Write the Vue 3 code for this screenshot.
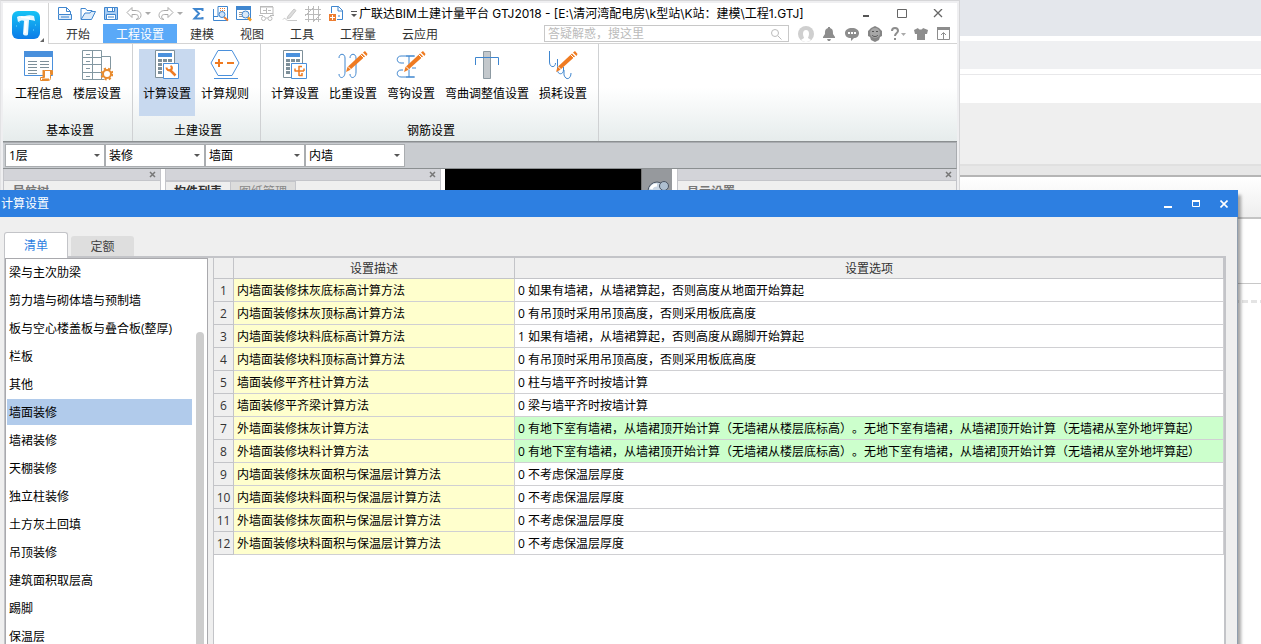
<script setup>
import { ref } from 'vue'

const menuTabs = ['开始', '工程设置', '建模', '视图', '工具', '工程量', '云应用']
const activeMenu = ref('工程设置')

const ribbonGroups = [
  {
    title: '基本设置',
    items: [
      { label: '工程信息', icon: 'info' },
      { label: '楼层设置', icon: 'floor' },
    ],
  },
  {
    title: '土建设置',
    items: [
      { label: '计算设置', icon: 'calc', active: true },
      { label: '计算规则', icon: 'rule' },
    ],
  },
  {
    title: '钢筋设置',
    items: [
      { label: '计算设置', icon: 'rebar' },
      { label: '比重设置', icon: 'weight' },
      { label: '弯钩设置', icon: 'hook' },
      { label: '弯曲调整值设置', icon: 'bend', wide: true },
      { label: '损耗设置', icon: 'loss' },
    ],
  },
]

const selectors = [
  { name: '楼层', value: '1层' },
  { name: '构件大类', value: '装修' },
  { name: '构件类型', value: '墙面' },
  { name: '构件', value: '内墙' },
]

const categories = [
  '梁与主次肋梁', '剪力墙与砌体墙与预制墙', '板与空心楼盖板与叠合板(整厚)', '栏板', '其他',
  '墙面装修', '墙裙装修', '天棚装修', '独立柱装修', '土方灰土回填', '吊顶装修',
  '建筑面积取层高', '踢脚', '保温层',
]
const activeCategory = ref('墙面装修')

const basement = '0 有地下室有墙裙，从墙裙顶开始计算（无墙裙从楼层底标高）。无地下室有墙裙，从墙裙顶开始计算（无墙裙从室外地坪算起）'
const rows = [
  { name: '内墙面装修抹灰底标高计算方法', option: '0 如果有墙裙，从墙裙算起，否则高度从地面开始算起' },
  { name: '内墙面装修抹灰顶标高计算方法', option: '0 有吊顶时采用吊顶高度，否则采用板底高度' },
  { name: '内墙面装修块料底标高计算方法', option: '1 如果有墙裙，从墙裙算起，否则高度从踢脚开始算起' },
  { name: '内墙面装修块料顶标高计算方法', option: '0 有吊顶时采用吊顶高度，否则采用板底高度' },
  { name: '墙面装修平齐柱计算方法', option: '0 柱与墙平齐时按墙计算' },
  { name: '墙面装修平齐梁计算方法', option: '0 梁与墙平齐时按墙计算' },
  { name: '外墙面装修抹灰计算方法', option: basement, changed: true },
  { name: '外墙面装修块料计算方法', option: basement, changed: true },
  { name: '内墙面装修抹灰面积与保温层计算方法', option: '0 不考虑保温层厚度' },
  { name: '内墙面装修块料面积与保温层计算方法', option: '0 不考虑保温层厚度' },
  { name: '外墙面装修抹灰面积与保温层计算方法', option: '0 不考虑保温层厚度' },
  { name: '外墙面装修块料面积与保温层计算方法', option: '0 不考虑保温层厚度' },
]
</script>

<template>
  <div class="desktop">
    <div class="backdrop">
      <div class="b-title"></div>
      <div class="b-tabs"></div>
      <div class="b-line"></div>
      <div class="b-ribbon"></div>
      <div class="b-edge"></div>
      <div class="b-head"></div>
      <div class="b-rule"></div>
      <div class="b-dash"></div>
    </div>

    <main class="window">
      <header class="top">
        <button class="logo" aria-label="应用菜单">
          <svg width="38" height="36" viewBox="0 0 38 36">
            <defs>
              <linearGradient id="lg" x1="0" y1="0" x2="0" y2="1">
                <stop offset="0" stop-color="#16c3f5" />
                <stop offset="1" stop-color="#0b7be8" />
              </linearGradient>
            </defs>
            <rect x="3" y="3" width="28" height="28" rx="6" fill="url(#lg)" />
            <path d="M8 9c3-2 5 0 8-1s6-1 9 0l1 5c-2-1-4-1-6-1l-1 14c0 2-4 2-5 0l1-13c-2-1-4 0-6 1z" fill="#e6f7ff" />
            <path d="M17 13l-1 12M12 9l9 1" stroke="#fff" stroke-width="2" fill="none" />
            <path d="M7 18h1M26 17h1M24 22h1M10 14h1" stroke="#7fd9ff" stroke-width="1" />
            <path d="M35 30v4h-4z" fill="#666" />
          </svg>
        </button>
        <div class="top-main">
          <div class="title-row">
            <div class="quick">
              <button aria-label="新建"><svg width="16" height="16" viewBox="0 0 16 16" fill="none" stroke="#3f86cf"><path d="M1.5 8V1.500h8l4 4V8M9.500 1.500v4h4" /><path d="M1.500 8.500h13v5h-13z" fill="#dcebfa" /><path d="M4 11h8" /></svg></button>
              <button aria-label="打开"><svg width="16" height="16" viewBox="0 0 16 16" fill="none" stroke="#3f86cf"><path d="M1 13V2.500h4.500l1.500 2h5V7" /><path d="M1 13.500l4-6.500h5l1-1.500h4.500l-4 8z" fill="#dcebfa" /></svg></button>
              <button aria-label="保存"><svg width="16" height="16" viewBox="0 0 16 16" fill="none" stroke="#3f86cf"><path d="M1.500 1.500h13v12h-13z" fill="#a9cdf3" /><path d="M4.500 1.500h7v4h-7z" fill="#fff" /><path d="M3.500 8.500h9v5h-9z" fill="#fff" /><path d="M5 11h6M9.500 2v3" /></svg></button>
              <button class="with-caret" aria-label="撤销"><svg width="16" height="16" viewBox="0 0 16 16" fill="none" stroke="#aaa"><path d="M1 6.500l5-5v3h3c4 0 6 2 6 5s-3 4-5 4c2-1 3-2 2-4-1-1-2-1-3-1H6v3z" /></svg><i class="caret pale"></i></button>
              <button class="with-caret" aria-label="恢复"><svg width="16" height="16" viewBox="0 0 16 16" fill="none" stroke="#aaa"><path d="M15 6.500l-5-5v3H7c-4 0-6 2-6 5s3 4 5 4c-2-1-3-2-2-4 1-1 2-1 3-1h3v3z" /></svg><i class="caret pale"></i></button>
              <button aria-label="汇总计算"><svg width="16" height="16" viewBox="0 0 16 16" fill="none" stroke="#3f86cf" stroke-width="2"><path d="M12.500 5V3H4.500L9 7.500l-4.500 5h8V11" /></svg></button>
              <button aria-label="查看工程量"><svg width="16" height="16" viewBox="0 0 16 16" fill="none"><path d="M5 10.500V.5h9.500v14H.5V3M.5 10.500H5" stroke="#3f86cf" /><path d="M7 2.500h6M7 4.500h6" stroke="#ed7d31" stroke-dasharray="1 1" /><path d="M11 11l4 3.500" stroke="#ed7d31" stroke-width="2" /><circle cx="9" cy="8.500" r="3" fill="#cfe3f8" stroke="#3f86cf" /></svg></button>
              <button aria-label="查看报表"><svg width="16" height="16" viewBox="0 0 16 16" fill="none"><path d="M.5 1.500h14v12H.500z" stroke="#3f86cf" /><path d="M0 0h15v4H0z" fill="#3f86cf" /><path d="M3 6.500h3M3 8.500h3M3 10.500h3" stroke="#999" /><circle cx="9.500" cy="8.500" r="3.500" fill="#dceaf8" stroke="#3f86cf" /><path d="M12 11.500l3 3" stroke="#f39a1f" stroke-width="2.500" /></svg></button>
              <button aria-label="对比"><svg width="16" height="16" viewBox="0 0 16 16" fill="none" stroke="#bbb"><path d="M1.500 8V1h12.500v8M4 4.500h3M9 4.500h3M7.500 2v5M1 .5h13M1 7.500h13" /><circle cx="4.500" cy="12.500" r="2" /><circle cx="11" cy="12.500" r="2" /><path d="M7 12h2M0 9.500h4M11 9.500h4" /></svg></button>
              <button aria-label="绘制"><svg width="16" height="16" viewBox="0 0 16 16" fill="none" stroke="#c8c8c8"><path d="M6 10l6-7 2 1.500L8 12l-3 .5z" fill="#ddd" /><path d="M1 13.500c2-3 3 1 5 1h9" /></svg></button>
              <button aria-label="轴网"><svg width="16" height="16" viewBox="0 0 16 16" fill="none" stroke="#bbb"><path d="M3.500 0v16M8.500 0v16M13.500 0v16M0 3.500h16M0 8.500h16M0 13.500h16M0 10l8-8M8 16l7-7" /></svg></button>
              <button aria-label="导出"><svg width="16" height="16" viewBox="0 0 16 16" fill="none"><path d="M3.500 7V.5h7l4 4v9H9M10 0v5h5" stroke="#3f86cf" /><path d="M1 8h7v7H1z" fill="#ed7d31" /><path d="M4.500 9v5M2 11.500h5" stroke="#fff" /><path d="M10 10h2" stroke="#3f86cf" /></svg></button>
              <button class="more" aria-label="自定义快速访问"><i class="caret dark"></i></button>
            </div>
            <h1 class="title">广联达BIM土建计量平台 GTJ2018 - [E:\清河湾配电房\k型站\K站：建模\工程1.GTJ]</h1>
            <div class="controls">
              <button aria-label="最小化"><svg width="10" height="10"><path d="M2 7h6" stroke="#555" stroke-width="2" /></svg></button>
              <button aria-label="最大化"><svg width="10" height="10"><path d="M.5 .5h9v8h-9z" stroke="#666" fill="none" /></svg></button>
              <button aria-label="关闭"><svg width="10" height="10"><path d="M1 0l8 8M9 0l-8 8" stroke="#666" stroke-width="1.300" /></svg></button>
            </div>
          </div>
          <div class="menu-row">
            <nav class="menu">
              <button v-for="t in menuTabs" :key="t" :class="{ on: t === activeMenu }" @click="activeMenu = t">{{ t }}</button>
            </nav>
            <div class="search">
              <input type="text" aria-label="搜索" placeholder="答疑解惑，搜这里" />
              <svg width="12" height="12" fill="none" stroke="#bbb"><circle cx="5" cy="5" r="3.500" /><path d="M8 8l3.500 3.500" /></svg>
            </div>
            <div class="tools">
              <button aria-label="用户"><svg width="16" height="16"><circle cx="8" cy="8" r="8" fill="#cfcfcf" /><path d="M5 8a3 4 0 0 1 6 0c0 2-1 3-1 4l3 2a8 8 0 0 1-10 0l3-2c0-1-1-2-1-4z" fill="#fff" /></svg></button>
              <button aria-label="通知"><svg width="16" height="16" fill="#8d8d8d"><path d="M7 1h2v1c3 1 3 3 3 6l2 3v1H2v-1l2-3c0-3 0-5 3-6zM6 13h4l-1 2H7z" /></svg></button>
              <button aria-label="消息"><svg width="16" height="16"><path d="M8 2c4 0 7 2 7 5s-2 5-5 5l-3 3v-3c-4 0-6-2-6-5s3-5 7-5z" fill="#8d8d8d" /><path d="M4 6h2v2H4zM7 6h2v2H7zM10 6h2v2h-2z" fill="#fff" /></svg></button>
              <button aria-label="客服"><svg width="16" height="16"><path d="M4 2l4-2 4 2 3 3v5l-2 1-1 3-4 2-4-2-1-3-2-1V5z" fill="#858585" /><circle cx="8" cy="7" r="5" fill="#a7a7a7" /><path d="M5 5.500h2M9 5.500h2M5 9c1 2 5 2 6 0" stroke="#555" fill="none" /></svg></button>
              <button class="help" aria-label="帮助"><svg width="17" height="16" fill="none" stroke="#8d8d8d" stroke-width="2"><path d="M2 5c0-4 6-4 6 0 0 2-3 2-3 5M5 12v2" /><path d="M11 7h5l-2.500 3z" fill="#aaa" stroke="none" /></svg></button>
              <button aria-label="换肤"><svg width="16" height="16"><path d="M4 2c1 2 4 2 5 0l5 2-1 4h-2v6H3V8H1L0 4z" fill="#8d8d8d" /></svg></button>
              <button aria-label="折叠功能区"><svg width="16" height="16" fill="none" stroke="#8d8d8d"><path d="M.5 3v10.500h12V3M6.500 13V7M4 9l2.500-2.500L9 9" /><path d="M0 2.500h13" stroke-width="3" /></svg></button>
            </div>
          </div>
        </div>
      </header>

      <section class="ribbon">
        <div v-for="g in ribbonGroups" :key="g.title" class="group">
          <div class="group-items">
            <button v-for="it in g.items" :key="it.icon" class="rb" :class="{ active: it.active, wide: it.wide }">
              <svg v-if="it.icon === 'info'" width="32" height="32" viewBox="0 0 32 32" fill="none">
                <path d="M1.500 2.500h28v24h-28z" stroke="#4a90dc" fill="#fff" /><path d="M1 2h29v6H1z" fill="#4a90dc" />
                <path d="M5 12.500h9M17 12.500h9M5 15.500h9M17 15.500h9M5 18.500h9M17 18.500h9M5 21.500h9M5 24.500h9" stroke="#7d8f99" />
                <path d="M21.500 21.500h8v4h-2v4c0 1-1 2-2 2h-8v-3h4z" fill="#fff" stroke="#e88b2e" /><path d="M19 30.500h7M20.500 21v7M28 21v4" stroke="#e88b2e" stroke-width="2" />
              </svg>
              <svg v-else-if="it.icon === 'floor'" width="32" height="32" viewBox="0 0 32 32" fill="none">
                <path d="M1.500 1.500h19v29h-19zM11.500 1.500v29M1.500 8.500h19M1.500 15.500h19M1.500 23.500h19M20.500 7.500h9v13M5 5.500h4M5 12.500h4M5 19.500h4M5 27.500h4M20 30.500h3" stroke="#8297a1" />
                <circle cx="26" cy="25" r="5" fill="#fff" stroke="#e88b2e" stroke-width="3" stroke-dasharray="2 2" /><circle cx="26" cy="25" r="4" fill="#fff" stroke="#e88b2e" stroke-width="2" />
              </svg>
              <svg v-else-if="it.icon === 'calc' || it.icon === 'rebar'" width="32" height="32" viewBox="0 0 32 32" fill="none">
                <path d="M4.500 1.500h19v27h-19z" fill="#fff" stroke="#7d8f99" /><path d="M7 4h14v4H7z" fill="#4a90dc" />
                <path d="M7 11.500h14M7 15.500h14M7 19.500h5M7 23.500h5" stroke="#7d8f99" stroke-width="3" stroke-dasharray="4 1" />
                <path d="M12.500 14.500h15v15h-15z" fill="#fff" stroke="#4a90dc" />
                <g v-if="it.icon === 'calc'" stroke="#ef7b22"><path d="M18.500 20.500l6 6" stroke-width="2.500" /><path d="M15.500 18.500c0 2 2 3.500 4 2.500s2-3 0-4" stroke-width="2" /></g>
                <path v-else d="M20 17v10M15.500 22H25M19.500 17.500H23M16 19.500v2.500M25 22v-2.500M20 26.500h3V24" stroke="#ef7b22" stroke-width="1.500" />
              </svg>
              <svg v-else-if="it.icon === 'rule'" width="32" height="32" viewBox="0 0 32 32" fill="none">
                <path d="M9 1.500h14L30 14l-7 12.500H9L2 14zM5 29.500h24" stroke="#4a90dc" /><path d="M6 14h8M10 10v8M18 14h7" stroke="#ef7b22" stroke-width="2" />
              </svg>
              <svg v-else-if="it.icon === 'bend'" width="32" height="32" viewBox="0 0 32 32" fill="none">
                <path d="M12.500 2.500h7v27h-7z" fill="#c3c8cc" stroke="#8d9aa2" /><path d="M4.500 16V8.500h23V16" stroke="#3f86cf" />
              </svg>
              <svg v-else width="32" height="32" viewBox="0 0 32 32" fill="none">
                <path v-if="it.icon === 'weight'" d="M2 9c0-5 6-5 6 0v14c0 7-6 7-6 2M13 9c0-5 6-5 6 0v14c0 7-6 7-6 2" stroke="#3f86cf" />
                <path v-else-if="it.icon === 'hook'" d="M9 14H6c-5 0-5-7 0-7h14M14 7v21M20 28H6c-5 0-5-7 0-7h2M11 7h8M11 28h8M17 19h4" stroke="#3f86cf" />
                <path v-else d="M2.500 2v11c0 6 6 6 6 1M10.500 10v11c0 5 6 5 6 0v-3M17 21v5c2 6 7 4 7-2" stroke="#3f86cf" />
                <path d="M9 23l1.500-5L25 4.500l3 3L13 21z" fill="#ef7b22" /><path d="M23.500 5.500l4 4M11 17.500l3.500 3.500" stroke="#fff" /><path d="M26 3.500l2-1.500 2.500 3-1 2z" fill="#ef7b22" />
              </svg>
              <span>{{ it.label }}</span>
            </button>
          </div>
          <div class="caption">{{ g.title }}</div>
        </div>
      </section>

      <section class="selectors">
        <div v-for="s in selectors" :key="s.name" class="pick">
          <select :aria-label="s.name"><option>{{ s.value }}</option></select>
          <i class="caret"></i>
        </div>
      </section>

      <section class="docks">
        <div class="dock nav-dock">
          <div class="dock-head"><button aria-label="关闭导航树"><svg width="7" height="7"><path d="M1 1l5 5M6 1L1 6" stroke="#777" stroke-width="1.500" /></svg></button></div>
          <div class="dock-title">导航树</div>
        </div>
        <div class="dock list-dock">
          <div class="dock-head"><button aria-label="关闭构件列表"><svg width="7" height="7"><path d="M1 1l5 5M6 1L1 6" stroke="#777" stroke-width="1.500" /></svg></button></div>
          <div class="dock-tabs"><button class="on">构件列表</button><button>图纸管理</button></div>
        </div>
        <div class="canvas">
          <div class="view-tool">
            <svg width="24" height="24" viewBox="0 0 24 24" stroke="#4b5563"><circle cx="10" cy="11" r="9" fill="#c9d6e4" /><circle cx="17" cy="6" r="4.500" fill="#aebfd0" /><path d="M4 9c1-3 4-4 6-4" stroke="#fff" stroke-width="3" fill="none" /></svg>
          </div>
        </div>
        <div class="dock show-dock">
          <div class="dock-head"><button aria-label="关闭显示设置"><svg width="7" height="7"><path d="M1 1l5 5M6 1L1 6" stroke="#777" stroke-width="1.500" /></svg></button></div>
          <div class="dock-title">显示设置</div>
        </div>
      </section>
    </main>

    <section class="dialog" role="dialog" aria-labelledby="dlg-title">
      <header class="dlg-bar">
        <h2 id="dlg-title">计算设置</h2>
        <div class="dlg-controls">
          <button aria-label="最小化"><svg width="8" height="8"><path d="M0 7h8" stroke="#fff" stroke-width="2" /></svg></button>
          <button aria-label="最大化"><svg width="8" height="8"><path d="M.5 1v5.500h7V1" stroke="#fff" fill="none" /><path d="M0 1h8" stroke="#fff" stroke-width="2" /></svg></button>
          <button aria-label="关闭"><svg width="8" height="8"><path d="M.5.5l7 7M7.500.5l-7 7" stroke="#fff" stroke-width="1.600" /></svg></button>
        </div>
      </header>
      <div class="dlg-body">
        <div class="tabs">
          <button class="on">清单</button>
          <button>定额</button>
        </div>
        <div class="page">
          <div class="list">
            <ul>
              <li v-for="c in categories" :key="c">
                <button :class="{ on: c === activeCategory }" @click="activeCategory = c">{{ c }}</button>
              </li>
            </ul>
            <div class="thumb"></div>
          </div>
          <div class="grid">
            <table>
              <colgroup><col class="c-no" /><col class="c-name" /><col /></colgroup>
              <thead>
                <tr><th></th><th>设置描述</th><th>设置选项</th></tr>
              </thead>
              <tbody>
                <tr v-for="(r, i) in rows" :key="r.name">
                  <td class="no">{{ i + 1 }}</td>
                  <td class="name">{{ r.name }}</td>
                  <td class="opt" :class="{ changed: r.changed }">{{ r.option }}</td>
                </tr>
              </tbody>
            </table>
          </div>
        </div>
      </div>
    </section>
  </div>
</template>

<style>
body {
  margin: 0;
  overflow: hidden;
}
</style>

<style scoped>
.desktop {
  position: relative;
  height: 100vh;
  overflow: hidden;
  background: #fff;
  color: #000;
  font: 12px/16px "Open Sans", "Noto Sans CJK SC", sans-serif;
  text-spacing-trim: space-all;
}
.desktop * {
  box-sizing: border-box;
}
button {
  border: 0;
  padding: 0;
  margin: 0;
  background: none;
  font: inherit;
  color: inherit;
  white-space: nowrap;
}
h1,
h2 {
  margin: 0;
  font: inherit;
}
svg {
  display: block;
}
.caret {
  display: block;
  border: 3px solid transparent;
  border-top-color: #555;
  border-bottom: 0;
}
.caret.pale {
  border-top-color: #aaa;
}

/* window behind the application */
.backdrop {
  display: flex;
  flex-direction: column;
}
.b-title {
  height: 36px;
  background: #e4e7ec;
}
.b-tabs {
  height: 28px;
  margin-top: 5px;
  background: #eff0f2;
}
.b-line {
  height: 1px;
  margin: 5px 0 28px;
  background: #e8e8ea;
}
.b-ribbon {
  height: 61px;
  background: #efefef;
}
.b-edge {
  height: 13px;
  border-top: 2px solid #e0e0e0;
  border-bottom: 2px solid #b5b5b5;
  background: #e7e7e7;
}
.b-head {
  height: 42px;
  border-bottom: 2px solid #c4c4c4;
  background: linear-gradient(#fff, #eee);
}
.b-rule {
  height: 1px;
  margin-top: 64px;
  background: #c8c8c8;
}
.b-dash {
  height: 3px;
  margin-top: 16px;
  background: repeating-linear-gradient(90deg, #e4e4e4 0 6px, #fff 6px 9px);
}

/* application window */
.window {
  position: absolute;
  inset: 0 301px 0 0;
  display: flex;
  flex-direction: column;
  border: 1px solid #d6d6d8;
  border-left-color: #e2e2e4;
  padding: 2px;
  background: #efeff1;
}
.top {
  display: flex;
  background: #fff;
}
.logo {
  width: 46px;
  height: 41px;
  padding: 5px 0 0 6px;
  border-right: 1px solid #d4d4d4;
}
.top-main {
  flex: 1;
  min-width: 0;
  border-bottom: 1px solid #d4d4d4;
}
.title-row {
  display: flex;
  align-items: center;
  height: 21px;
  padding: 0 1px 0 8px;
}
.quick {
  display: flex;
  gap: 7px;
}
.quick button {
  width: 16px;
}
.quick .with-caret {
  display: flex;
  align-items: center;
  justify-content: space-between;
  width: 25px;
}
.quick .more {
  width: 8px;
  display: flex;
  align-items: center;
}
.caret.dark {
  position: relative;
  margin-top: 4px;
}
.caret.dark::before {
  content: "";
  position: absolute;
  left: -3px;
  top: -6px;
  width: 6px;
  height: 1px;
  background: #555;
}
.title {
  flex: 1;
  font-family: Inter, "Noto Sans CJK SC", sans-serif;
  white-space: nowrap;
}
.controls {
  display: flex;
}
.controls button {
  display: flex;
  align-items: center;
  justify-content: center;
  width: 36px;
  height: 20px;
}
.menu-row {
  display: flex;
  align-items: center;
  height: 19px;
  padding: 0 4px;
  color: #333;
}
.menu {
  display: flex;
  flex: 1;
}
.menu button {
  height: 19px;
  padding: 2px 13px 0;
}
.menu .on {
  background: #5aa9f8;
  color: #fff;
}
.search {
  position: relative;
  width: 245px;
}
.search input {
  display: block;
  width: 100%;
  height: 17px;
  padding: 0 3px;
  border: 1px solid #c8c8c8;
  background: #fff;
  font: inherit;
}
.search input::placeholder {
  color: #bbb;
}
.search svg {
  position: absolute;
  right: 7px;
  top: 3px;
}
.tools {
  display: flex;
  gap: 7px;
  padding-left: 9px;
}

.ribbon {
  display: flex;
  padding-left: 2px;
  border-bottom: 1px solid #8b8f91;
  background: linear-gradient(#fff 45%, #e6ecec);
}
.group {
  padding: 5px 7px 0 6px;
  border-right: 1px solid #cfd1d3;
}
.group-items {
  display: flex;
  gap: 2px;
}
.rb {
  display: flex;
  flex-direction: column;
  align-items: center;
  gap: 5px;
  width: 56px;
  height: 67px;
}
.rb.wide {
  width: 92px;
}
.rb.active {
  background: #c8d9ef;
}
.caption {
  padding: 7px 0 2px 4px;
  text-align: center;
}

.selectors {
  display: flex;
  height: 27px;
  padding: 1px 2px;
  border: 1px solid #a9acb0;
  border-width: 1px 1px 1px 0;
  border-bottom-color: #8b8f91;
  background: #c9ccd0;
}
.pick {
  position: relative;
  width: 100px;
}
.pick select {
  display: block;
  width: 100%;
  height: 23px;
  padding: 0 3px;
  border: 1px solid #aaadb0;
  border-radius: 0;
  appearance: none;
  background: #fff;
  color: #000;
  font: inherit;
}
.pick .caret {
  position: absolute;
  right: 5px;
  top: 10px;
}

.docks {
  display: flex;
  flex: 1;
  min-height: 0;
  overflow: hidden;
  background: #fff;
}
.dock {
  border: 1px solid #c4c5ca;
  border-width: 0 1px;
  background: #efefef;
}
.nav-dock {
  width: 158px;
}
.list-dock {
  width: 276px;
  margin: 0 4px;
}
.show-dock {
  width: 280px;
  margin-left: 5px;
}
.dock-head {
  display: flex;
  align-items: center;
  justify-content: flex-end;
  height: 12px;
  padding-right: 4px;
  border-bottom: 1px solid #c4c5ca;
  background: #d3d4d9;
}
.dock-title {
  padding: 3px 9px;
  font-weight: 700;
  color: #777;
}
.dock-tabs {
  display: flex;
}
.dock-tabs button {
  height: 22px;
  padding: 0 8px;
  border: 1px solid #c4c5ca;
  border-left: 0;
  background: #dcdcdc;
  color: #888;
}
.dock-tabs .on {
  background: #efefef;
  font-weight: 700;
  color: #333;
}
.canvas {
  display: flex;
  flex: 1;
  justify-content: flex-end;
  background: #000;
}
.view-tool {
  width: 31px;
  padding: 11px 0 0 5px;
  border-left: 1px solid #777;
  background: #96999d;
}

/* settings dialog */
.dialog {
  position: absolute;
  inset: 190px 23px 0 0;
  display: flex;
  flex-direction: column;
  background: #efefef;
  box-shadow: 3px 5px 3px rgba(0, 0, 0, 0.35);
}
.dlg-bar {
  display: flex;
  align-items: center;
  justify-content: space-between;
  height: 27px;
  padding-left: 1px;
  background: #2d7fe1;
  color: #fff;
}
.dlg-controls {
  display: flex;
}
.dlg-controls button {
  display: flex;
  align-items: center;
  justify-content: center;
  width: 28px;
  height: 26px;
}
.dlg-body {
  display: flex;
  flex: 1;
  flex-direction: column;
  min-height: 0;
  padding: 15px 11px 0 4px;
  border-right: 1px solid #8f9dad;
}
.tabs {
  display: flex;
  align-items: flex-end;
  gap: 3px;
  height: 24px;
}
.tabs button {
  width: 63px;
  height: 20px;
  padding-top: 2px;
  border-radius: 3px 3px 0 0;
  background: #dedede;
  color: #444;
}
.tabs .on {
  position: relative;
  width: 64px;
  height: 26px;
  margin-bottom: -2px;
  padding: 0;
  border: 1px solid #c3c4c8;
  border-bottom: 0;
  background: #fff;
  color: #2d7fe1;
}
.page {
  display: flex;
  flex: 1;
  gap: 5px;
  min-height: 0;
  border: solid #c3c4c8;
  border-width: 2px 2px 0 1px;
}
.list {
  position: relative;
  width: 203px;
  overflow: hidden;
  border: solid #a9a9ad;
  border-width: 1px 1px 0;
  background: #fff;
}
.list ul {
  display: flex;
  flex-direction: column;
  gap: 2px;
  margin: 0 15px 0 1px;
  padding: 0;
  list-style: none;
}
.list li button {
  display: block;
  width: 100%;
  height: 26px;
  padding: 2px 0 0 2px;
  text-align: left;
}
.list .on {
  background: #b1cbeb;
}
.thumb {
  position: absolute;
  top: 73px;
  right: 3px;
  bottom: 0;
  width: 8px;
  border-radius: 4px 4px 0 0;
  background: #cdcdcd;
}
.grid {
  flex: 1;
  min-width: 0;
  overflow: hidden;
  border-left: 1px solid #c3c4c8;
  background: #fff;
}
table {
  width: 100%;
  table-layout: fixed;
  border-spacing: 0;
}
.c-no {
  width: 20px;
}
.c-name {
  width: 281px;
}
th,
td {
  height: 23px;
  padding: 2px 3px 0;
  border: solid #d0d0d3;
  border-width: 0 1px 1px 0;
  white-space: nowrap;
  overflow: hidden;
}
th {
  height: 21px;
  border-color: #c3c4c8;
  background: #efefef;
  color: #333;
  font-weight: 400;
}
.no {
  padding: 2px 0 0;
  border-color: #c3c4c8;
  background: #efefef;
  color: #333;
  text-align: center;
}
.name {
  background: #ffffcd;
}
.changed {
  background: #ccffcc;
}
</style>
